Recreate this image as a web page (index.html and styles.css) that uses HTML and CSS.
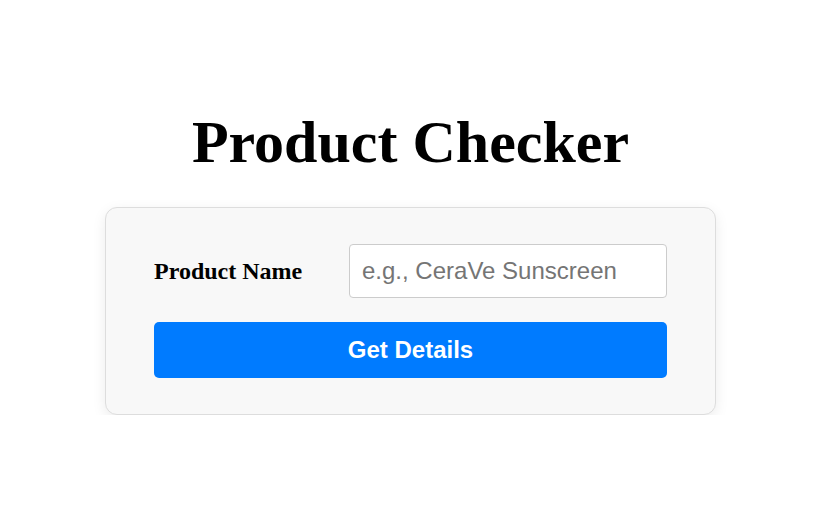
FILE: index.html
```html
<!DOCTYPE html>
<html lang="en">
<head>
<meta charset="utf-8">
<title>Product Checker</title>
<link rel="stylesheet" href="styles.css">
</head>
<body>
<main class="page">
  <h1 class="title">Product Checker</h1>
  <form class="card" onsubmit="return false;">
    <div class="field">
      <label class="label" for="product">Product Name</label>
      <input class="input" id="product" type="text" placeholder="e.g., CeraVe Sunscreen">
    </div>
    <button class="button" type="submit">Get Details</button>
  </form>
</main>
</body>
</html>
```

FILE: styles.css
```css
html, body {
  margin: 0;
  padding: 0;
  background: #ffffff;
}

.page {
  box-sizing: border-box;
  width: 821px;
  display: flex;
  flex-direction: column;
  align-items: center;
  padding-top: 108px;
  font-family: "Liberation Serif", "Times New Roman", serif;
}

.title {
  margin: 0 0 30px;
  font-size: 60px;
  font-weight: bold;
  line-height: normal;
  color: #000;
}

.card {
  box-sizing: border-box;
  width: 611px;
  padding: 36px 48px;
  background: #f8f8f8;
  border: 1px solid #dddddd;
  border-radius: 12px;
  box-shadow: 0 4px 14px rgba(0, 0, 0, 0.08);
  display: flex;
  flex-direction: column;
  gap: 24px;
}

.field {
  display: grid;
  grid-template-columns: 195px 1fr;
  align-items: center;
}

.label {
  font-family: "Liberation Serif", "Times New Roman", serif;
  font-weight: bold;
  font-size: 24px;
  color: #000;
}

.input {
  box-sizing: border-box;
  width: 100%;
  height: 54px;
  padding: 12px;
  font-family: "Liberation Sans", Arial, sans-serif;
  font-size: 24px;
  border: 1px solid #cccccc;
  border-radius: 4px;
  background: #fff;
  color: #000;
  outline: none;
}

.input::placeholder {
  color: #757575;
}

.button {
  box-sizing: border-box;
  width: 100%;
  height: 56px;
  border: none;
  border-radius: 5px;
  background: #007bff;
  color: #fff;
  font-family: "Liberation Sans", Arial, sans-serif;
  font-weight: bold;
  font-size: 24px;
  cursor: pointer;
}
```
